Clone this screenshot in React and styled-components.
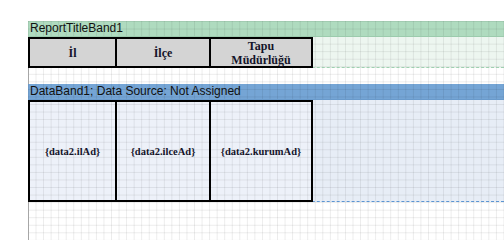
import React from 'react'
import styled, { createGlobalStyle, css } from 'styled-components'

const GlobalStyle = createGlobalStyle`
  html, body {
    margin: 0;
    padding: 0;
    background: #fff;
  }
  body {
    font-family: 'Liberation Sans', Arial, sans-serif;
  }
`

// dotted design grid, pinned to the viewport so every band lines up
const gridLines = css`
  background-image: linear-gradient(
      to right,
      rgba(0, 0, 0, 0.075) 1px,
      transparent 1px
    ),
    linear-gradient(to bottom, rgba(0, 0, 0, 0.075) 1px, transparent 1px);
  background-size: 7.56px 7.56px;
  background-position: 28px 21px;
  background-attachment: fixed;
`

const headerCols = [
  { w: 89, label: ['İl'] },
  { w: 96, label: ['İlçe'] },
  { w: 104, label: ['Tapu', 'Müdürlüğü'] },
]

const dataCols = [
  { w: 89, label: '{data2.ilAd}' },
  { w: 96, label: '{data2.ilceAd}' },
  { w: 104, label: '{data2.kurumAd}' },
]

export default function App() {
  return (
    <>
      <GlobalStyle />
      <Page>
        <Sheet>
          <BandTitle $bg="#afdbbf" $line="#9ccbad">
            ReportTitleBand1
          </BandTitle>
          <BandBody $h={31} $bg="#edf6f0" $line="#9fd0b0">
            <Row>
              {headerCols.map((c, i) => (
                <Cell key={i} $w={c.w} $bg="#d4d4d4" $size={12} $grid={false}>
                  <span>
                    {c.label.map((l, j) => (
                      <Line key={j}>{l}</Line>
                    ))}
                  </span>
                </Cell>
              ))}
            </Row>
          </BandBody>
          <Gap />
          <BandTitle $bg="#75a5d5" $line="#6a9bcc">
            DataBand1; Data Source: Not Assigned
          </BandTitle>
          <BandBody $h={102} $bg="#e7edf6" $line="#5b95d2">
            <Row>
              {dataCols.map((c, i) => (
                <Cell key={i} $w={c.w} $bg="#edf1f9" $size={10.5} $grid>
                  {c.label}
                </Cell>
              ))}
            </Row>
          </BandBody>
          <Rest />
        </Sheet>
      </Page>
    </>
  )
}

const Page = styled.div`
  box-sizing: border-box;
  width: 504px;
  height: 240px;
  padding: 21px 0 0 28px;
  overflow: hidden;
`
const Sheet = styled.div`
  display: flex;
  flex-direction: column;
  height: 100%;
`
const BandTitle = styled.div`
  box-sizing: border-box;
  height: 16px;
  line-height: 15px;
  padding-left: 2px;
  font-size: 12px;
  color: #111;
  white-space: nowrap;
  background-color: ${p => p.$bg};
  border-bottom: 1px solid ${p => p.$line};
  ${gridLines};
`
const BandBody = styled.div`
  box-sizing: border-box;
  height: ${p => p.$h}px;
  background-color: ${p => p.$bg};
  border-bottom: 1px dashed ${p => p.$line};
  ${gridLines};
`
const Row = styled.div`
  display: flex;
  height: 100%;
`
const Cell = styled.div`
  box-sizing: border-box;
  width: ${p => p.$w}px;
  height: calc(100% + 1px);
  display: flex;
  align-items: center;
  justify-content: center;
  text-align: center;
  border: 2px solid #000;
  & + & {
    margin-left: -2px;
  }
  background-color: ${p => p.$bg};
  ${p => p.$grid && gridLines};
  font-family: 'Liberation Serif', 'Times New Roman', serif;
  font-weight: bold;
  font-size: ${p => p.$size}px;
  color: #14142a;
`
const Line = styled.div`
  line-height: 14px;
`
const Gap = styled.div`
  height: 16px;
  border-left: 1.5px solid #a6a6a6;
  background-color: #fff;
  ${gridLines};
`
const Rest = styled.div`
  flex: 1;
  border-left: 1.5px solid #a6a6a6;
  background-color: #fff;
  ${gridLines};
`
